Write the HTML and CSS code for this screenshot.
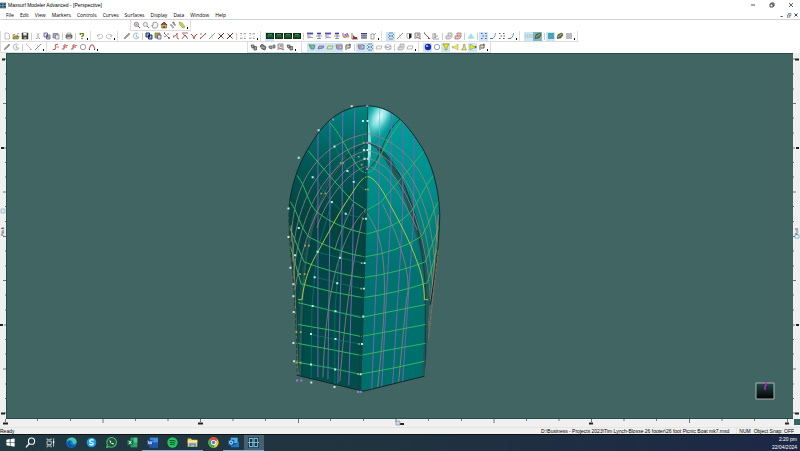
FILE: index.html
```html
<!DOCTYPE html>
<html lang="en">
<head>
<meta charset="utf-8">
<title>Maxsurf Modeler Advanced</title>
<link rel="stylesheet" href="styles.css">
</head>
<body>
<svg class="defs" aria-hidden="true">
<symbol id="mag" viewBox="0 0 8 8"><circle cx="3.4" cy="3.4" r="2.1" fill="#eee" stroke="#777" stroke-width=".8"/><path d="M5 5l2 2" stroke="#666"/><path d="M2.4 3.4h2M3.4 2.4v2" stroke="#c55" stroke-width=".6"/></symbol>
<symbol id="mag2" viewBox="0 0 8 8"><circle cx="3.4" cy="3.4" r="2.1" fill="#eee" stroke="#888" stroke-width=".7"/><path d="M5 5l2 2" stroke="#777"/></symbol>
<symbol id="hand" viewBox="0 0 8 8"><path d="M2 7L.8 4.3l1.2.3V2l1-.9 1 .5 1-.5 1 1 .8.7-.3 2.6L5.5 7z" fill="#f5f5f5" stroke="#777" stroke-width=".7"/></symbol>
<symbol id="home" viewBox="0 0 8 8"><path d="M1.8 4v3h4.6V4" fill="#d8b840" stroke="#554" stroke-width=".7"/><path d="M.8 4L4 1.2 7.2 4" fill="#b44" stroke="#433" stroke-width=".9"/><path d="M4 5v2" stroke="#222"/></symbol>
<symbol id="turn" viewBox="0 0 8 8"><path d="M1 4h2v2M7 4H5V2M3 2l2-1v2M5 6L3 7" fill="none" stroke="#667" stroke-width=".9"/></symbol>
<symbol id="shade" viewBox="0 0 8 8"><path d="M1 1l3 1 3 4-2 1-3-3z" fill="#d6d234" stroke="#886" stroke-width=".6"/></symbol>
<symbol id="new" viewBox="0 0 8 8"><path d="M2 1h3l1.5 1.5V7H2z" fill="#fff" stroke="#999" stroke-width=".6"/></symbol>
<symbol id="open" viewBox="0 0 8 8"><path d="M1 7V2.5h2l1 1h2V5" fill="#e8d070" stroke="#775" stroke-width=".6"/><path d="M1 7l1.2-2.5h5L6 7z" fill="#b5a52c" stroke="#554" stroke-width=".5"/><path d="M5 2l1.5-.5.5 1" fill="none" stroke="#444" stroke-width=".5"/></symbol>
<symbol id="save" viewBox="0 0 8 8"><path d="M1 1h6v6H1z" fill="#444b2e" stroke="#222" stroke-width=".5"/><path d="M2.3 1h3.4v2.5H2.3z" fill="#eee"/><path d="M2.8 5h2.6v2H2.8z" fill="#999"/></symbol>
<symbol id="cut" viewBox="0 0 8 8"><path d="M3 1l2 5M5 1L3 6" stroke="#aab" stroke-width=".7"/><path d="M2 6.5h1.5M4.7 6.5H6" stroke="#99a"/></symbol>
<symbol id="copy" viewBox="0 0 8 8"><path d="M1 1h3.5v4H1zM3.5 3H7v4H3.5z" fill="#dde" stroke="#447" stroke-width=".7"/><path d="M4.2 4.3h2M4.2 5.6h2" stroke="#447" stroke-width=".5"/></symbol>
<symbol id="copyb" viewBox="0 0 8 8"><path d="M1 1h3.5v4H1zM3.5 3H7v4H3.5z" fill="#9ad" stroke="#125" stroke-width=".9"/></symbol>
<symbol id="paste" viewBox="0 0 8 8"><path d="M1 1.5h5V6H1z" fill="#aaa" stroke="#666" stroke-width=".6"/><path d="M3.5 3H7v4H3.5z" fill="#eef" stroke="#667" stroke-width=".6"/></symbol>
<symbol id="pastey" viewBox="0 0 8 8"><path d="M1 1h5v5H1z" fill="#b2a83e" stroke="#553" stroke-width=".6"/><path d="M3.5 3H7v4H3.5z" fill="#cdf" stroke="#338" stroke-width=".6"/></symbol>
<symbol id="print" viewBox="0 0 8 8"><path d="M2 1h4v2H2z" fill="#eee" stroke="#777" stroke-width=".5"/><path d="M1 3h6v3H1z" fill="#888" stroke="#444" stroke-width=".6"/><path d="M2 5h4v2H2z" fill="#ddd" stroke="#555" stroke-width=".4"/></symbol>
<symbol id="help" viewBox="0 0 8 8"><path d="M2.3 3V1.6h3v2L4 4.3v1" fill="none" stroke="#7a8618" stroke-width="1.4"/><path d="M3.3 6.7h1.4" stroke="#554"/></symbol>
<symbol id="undo" viewBox="0 0 8 8"><path d="M1 4l1.5-2M1 4l2 1M1 4q4-3 5.5-.5T4 6.8H2" fill="none" stroke="#aaa" stroke-width=".7"/></symbol>
<symbol id="redo" viewBox="0 0 8 8"><path d="M7 4L5.500 2M7 4L5 5M7 4Q3 1 1.500 3.500T4 6.800h2" fill="none" stroke="#aaa" stroke-width=".7"/></symbol>
<symbol id="pen" viewBox="0 0 8 8"><path d="M1 7l1-2 4-4 1 1-4 4z" fill="#999" stroke="#666" stroke-width=".4"/></symbol>
<symbol id="clk" viewBox="0 0 8 8"><path d="M6.500 2A3 3 0 1 0 7 5H4.500V2.500" fill="#eef" stroke="#9aa" stroke-width=".7"/></symbol>
<symbol id="net1" viewBox="0 0 8 8"><path d="M1 1l3 3 2.500 2.500M4 2h2M1 5l2-1" fill="none" stroke="#a55" stroke-width=".8"/><path d="M5 6h2M1 1h1" stroke="#333"/></symbol>
<symbol id="net2" viewBox="0 0 8 8"><path d="M1 4h2l2-2v4l2 1" fill="none" stroke="#c33" stroke-width=".8"/><path d="M5 1v1M1 5h1" stroke="#444"/></symbol>
<symbol id="net3" viewBox="0 0 8 8"><path d="M1 1h6M1 7l3-4 3 4M2 2l4 3" fill="none" stroke="#944" stroke-width=".8"/></symbol>
<symbol id="net4" viewBox="0 0 8 8"><path d="M1 2l2 2 1 2 1-2 2-2" fill="none" stroke="#d22" stroke-width=".9"/><path d="M3.500 6.500h1" stroke="#333"/></symbol>
<symbol id="diag" viewBox="0 0 8 8"><path d="M1 7l6-6" stroke="#c33" stroke-width=".9"/><path d="M1 6h1M6 2h1M1 2h2" stroke="#555" stroke-width=".7"/></symbol>
<symbol id="gdiag" viewBox="0 0 8 8"><path d="M1 7l6-6" stroke="#777" stroke-width=".8"/><path d="M3 3h1M4 6h1" stroke="#999" stroke-width=".6"/></symbol>
<symbol id="ex" viewBox="0 0 8 8"><path d="M1 7l6-6" stroke="#333"/><path d="M1.500 1.500l5 5" stroke="#b33"/></symbol>
<symbol id="grp" viewBox="0 0 8 8"><path d="M2 2h4v4H2z" fill="none" stroke="#999" stroke-width=".6" stroke-dasharray="1 1"/><path d="M1.500 1.500h1M5.500 1.500h1M1.500 6.500h1M5.500 6.500h1" stroke="#666"/></symbol>
<symbol id="view" viewBox="0 0 8 8"><path d="M0 1h8v6H0z" fill="#162c18"/><path d="M1 4h6M2 2.500h4" stroke="#31a348" stroke-width=".9"/><path d="M1 5.700h6" stroke="#174" stroke-width=".6"/></symbol>
<symbol id="tbl" viewBox="0 0 8 8"><path d="M1 1.500h6" stroke="#54a" stroke-width="1.800"/><path d="M1 4h4M2 5.500h5" stroke="#889" stroke-width=".8"/><path d="M2 2v5" stroke="#99a" stroke-width=".6"/></symbol>
<symbol id="mark" viewBox="0 0 8 8"><path d="M2 1.500h4" stroke="#43b" stroke-width="1.600"/><path d="M4 2v5M1 4h6M2 6.500h4" stroke="#788" stroke-width=".8"/></symbol>
<symbol id="comb" viewBox="0 0 8 8"><path d="M1 1v3l2 2V2l2 3V1l2 4" fill="none" stroke="#965b95"/><path d="M1 5h6" stroke="#c8b427"/></symbol>
<symbol id="hist" viewBox="0 0 8 8"><path d="M1 1v6h6" fill="none" stroke="#444" stroke-width=".7"/><path d="M2 7V3l2 2 2 0v2z" fill="#a32c35"/></symbol>
<symbol id="grid" viewBox="0 0 8 8"><path d="M1 1h6v6H1z" fill="#aab"/><path d="M1 1.500h6" stroke="#33b"/><path d="M1 3.500h6M1 5.300h6M3 1v6M5 1v6" stroke="#667" stroke-width=".5"/></symbol>
<symbol id="calc" viewBox="0 0 8 8"><path d="M2 2h3v5H2zM5 3l2-2" fill="none" stroke="#888" stroke-width=".8"/></symbol>
<symbol id="mesh" viewBox="0 0 8 8"><path d="M1 2l2 2-2 2M3 4h2M7 2L5 4l2 2M2 1h4M2 7h4" fill="none" stroke="#567" stroke-width=".7"/></symbol>
<symbol id="half" viewBox="0 0 8 8"><path d="M4 1.500h2.500v4L4 7z" fill="#222"/><path d="M4 1.500H2v4L4 7" fill="none" stroke="#777" stroke-width=".6"/></symbol>
<symbol id="frame" viewBox="0 0 8 8"><path d="M1 7V1h5v5" fill="#ddd" stroke="#777" stroke-width=".8"/><path d="M2 5l5 2M3 3h2" stroke="#944" stroke-width=".8"/></symbol>
<symbol id="rdiag" viewBox="0 0 8 8"><path d="M1 1l5 5" stroke="#844" stroke-width=".9"/><path d="M5 6.500h2M1 1h1" stroke="#c33"/></symbol>
<symbol id="stack" viewBox="0 0 8 8"><path d="M1 1v6h6M2 2h2M3 4h3M2 5.500h2M3 1v5" fill="none" stroke="#777" stroke-width=".7"/></symbol>
<symbol id="sheet" viewBox="0 0 8 8"><path d="M1 7V4h2V1h4v4L5 7z" fill="#ddd" stroke="#999" stroke-width=".7"/><path d="M3 4h3" stroke="#888" stroke-width=".6"/></symbol>
<symbol id="sheetr" viewBox="0 0 8 8"><path d="M1 7V4h2V1h4v4L5 7z" fill="#e4c5c5" stroke="#a66" stroke-width=".7"/><path d="M3 4h3" stroke="#a44" stroke-width=".6"/></symbol>
<symbol id="tri" viewBox="0 0 8 8"><path d="M1 6.500l3-5 3 5z" fill="#8ee7ec" stroke="#a4dce0" stroke-width=".5"/></symbol>
<symbol id="curve" viewBox="0 0 8 8"><path d="M1 6.500q5 1 5.500-5.500" fill="none" stroke="#668dc8" stroke-width=".9"/><path d="M1 6.500h3" stroke="#558" stroke-width=".6"/></symbol>
<symbol id="pts" viewBox="0 0 8 8"><path d="M1 1.500h1.500M5 1.500h1.500M2.500 4H4M5.500 4H7M1 6.500h1.500M5 6.500h1.500" stroke="#558"/></symbol>
<symbol id="dash" viewBox="0 0 8 8"><path d="M0 3h8M0 5h8" stroke="#96a68d" stroke-width=".8" stroke-dasharray="1.300 .8"/></symbol>
<symbol id="leaf" viewBox="0 0 8 8"><path d="M1 6.500l1-4 4-1.500 1 2-2 3z" fill="#6f722c" stroke="#334" stroke-width=".5"/><path d="M2 5l4-3" stroke="#ccb" stroke-width=".6"/></symbol>
<symbol id="teal" viewBox="0 0 8 8"><path d="M1 1h6v6H1z" fill="#48a5b3"/></symbol>
<symbol id="gray" viewBox="0 0 8 8"><path d="M1 1h6v6H1z" fill="#bbb"/></symbol>
<symbol id="wave" viewBox="0 0 8 8"><path d="M1 6.500h2l1-2.500-1-2 3-.8" fill="none" stroke="#c44"/><path d="M5 4h2" stroke="#a55" stroke-width=".7"/></symbol>
<symbol id="step" viewBox="0 0 8 8"><path d="M1 6h2V4h3M3 4V2h2" fill="none" stroke="#c44"/><path d="M5 2.500h2" stroke="#a44" stroke-width=".7"/></symbol>
<symbol id="ring" viewBox="0 0 8 8"><circle cx="4" cy="4" r="2.700" fill="#fff" stroke="#888" stroke-width=".8"/></symbol>
<symbol id="arch" viewBox="0 0 8 8"><path d="M1 6l2-4h2l2 4" fill="none" stroke="#b33" stroke-width=".9"/><path d="M1 6.500h1M6 6.500h1" stroke="#333"/></symbol>
<symbol id="tool" viewBox="0 0 8 8"><path d="M1 2h3v3H2zM4 3.500h2.500V7H4z" fill="#aaa" stroke="#444" stroke-width=".7"/></symbol>
<symbol id="tool2" viewBox="0 0 8 8"><path d="M1 3l2-2 4 3-1 3-3-1z" fill="#777" stroke="#333" stroke-width=".6"/><path d="M2 4l4 1" stroke="#ccc" stroke-width=".7"/></symbol>
<symbol id="tool3" viewBox="0 0 8 8"><path d="M1 5V3h3v3zM5 2h2v3H5z" fill="#aaa" stroke="#555" stroke-width=".7"/></symbol>
<symbol id="flag" viewBox="0 0 8 8"><path d="M1 2h6l-1 4H3z" fill="#8dbf9e" stroke="#476" stroke-width=".7"/><path d="M1 1l3 4" stroke="#5a6" stroke-width=".8"/></symbol>
<symbol id="quadp" viewBox="0 0 8 8"><path d="M1 6l1-3h5L6 5z" fill="#b7a1d5" stroke="#736490" stroke-width=".8"/></symbol>
<symbol id="quady" viewBox="0 0 8 8"><path d="M1 6l1-3h5L6 6z" fill="#e3e9aa" stroke="#8a9850" stroke-width=".7"/></symbol>
<symbol id="quadr" viewBox="0 0 8 8"><path d="M1 2h6v4H2z" fill="#c7cbd9" stroke="#667" stroke-width=".8"/><path d="M2 4h3" stroke="#b45" stroke-width=".8"/></symbol>
<symbol id="quadw" viewBox="0 0 8 8"><path d="M1 6l1-3h5L6 6z" fill="#fff" stroke="#a99" stroke-width=".7"/></symbol>
<symbol id="dia" viewBox="0 0 8 8"><path d="M4 1l3 2v3L4 7 1 5V3zM1 3l6 3M7 3L1 5" fill="none" stroke="#88a" stroke-width=".6"/></symbol>
<symbol id="ball" viewBox="0 0 8 8"><circle cx="4" cy="4" r="3.200" fill="#1a28b4"/><circle cx="3" cy="3" r="1.100" fill="#b8c5ff"/></symbol>
<symbol id="lampd" viewBox="0 0 8 8"><path d="M1 1h6L5 4.500v2.300H3V4.500z" fill="#eef000" stroke="#664" stroke-width=".5"/></symbol>
<symbol id="lampl" viewBox="0 0 8 8"><path d="M7 1v6L3.500 5H1V3.500h2.500z" fill="#efe94e" stroke="#997" stroke-width=".5"/></symbol>
<symbol id="lampu" viewBox="0 0 8 8"><path d="M1.500 7h5L5 4V1.500H3.500V4z" fill="#efe94e" stroke="#664" stroke-width=".5"/></symbol>
<symbol id="lampr" viewBox="0 0 8 8"><path d="M1 1v6l3.500-2H7V3.500H4.500z" fill="#eef000" stroke="#776" stroke-width=".5"/><path d="M6 4h1.500" stroke="#222"/></symbol>
<symbol id="cfg" viewBox="0 0 8 8"><path d="M2 7V2h4v3H3M5 1l2 1" fill="none" stroke="#555"/><path d="M2 3h3" stroke="#b9a44e"/></symbol>
<symbol id="ax" viewBox="0 0 16 16"><path d="M0 0h16v16H0z" fill="#173447"/><path d="M2 2h5v12H2zM9 2h5v12H9zM0 8h16" fill="none" stroke="#7cb4cf" stroke-width="1.500"/></symbol>
</svg>

<div class="app">
<header>
  <div class="title">
    <svg class="logo" viewBox="0 0 16 16"><use href="#ax"/></svg>
    <span>Maxsurf Modeler Advanced - [Perspective]</span>
    <div class="winbtns">
      <button aria-label="Minimize"><svg viewBox="0 0 8 8"><path d="M2 4h4" stroke="#222" stroke-width=".8"/></svg></button>
      <button aria-label="Restore"><svg viewBox="0 0 8 8"><path d="M2 3h3v3H2zM3 3V2h3v3H5" fill="none" stroke="#222" stroke-width=".8"/></svg></button>
      <button aria-label="Close"><svg viewBox="0 0 8 8"><path d="M2 2l4 4M6 2L2 6" stroke="#222" stroke-width=".7"/></svg></button>
    </div>
  </div>
  <nav class="menu">
    <button>File</button><button>Edit</button><button>View</button><button>Markers</button><button>Controls</button><button>Curves</button><button>Surfaces</button><button>Display</button><button>Data</button><button>Window</button><button>Help</button>
    <div class="mdi">
      <button aria-label="Minimize view"><svg viewBox="0 0 8 8"><path d="M2 6h3" stroke="#445" stroke-width="1.200"/></svg></button>
      <button aria-label="Restore view"><svg viewBox="0 0 8 8"><path d="M2 4h3v3H2zM3.500 4V2h3v3H5" fill="none" stroke="#567" stroke-width=".9"/></svg></button>
      <button aria-label="Close view"><svg viewBox="0 0 8 8"><path d="M2 2l4 4M6 2L2 6" stroke="#445" stroke-width="1.300"/></svg></button>
    </div>
  </nav>
  <div class="row">
    <div class="bar view">
      <button aria-label="Zoom"><svg><use href="#mag"/></svg></button><button aria-label="Shrink"><svg><use href="#mag2"/></svg></button><button aria-label="Pan"><svg><use href="#hand"/></svg></button><button aria-label="Home view"><svg><use href="#home"/></svg></button><button aria-label="Rotate"><svg><use href="#turn"/></svg></button><button aria-label="Color"><svg><use href="#shade"/></svg></button><i class="more"></i>
    </div>
  </div>
  <div class="row">
    <div class="bar first">
      <button aria-label="New"><svg><use href="#new"/></svg></button><button aria-label="Open"><svg><use href="#open"/></svg></button><button aria-label="Save"><svg><use href="#save"/></svg></button><i class="sep"></i><button aria-label="Cut"><svg><use href="#cut"/></svg></button><button aria-label="Copy"><svg><use href="#copy"/></svg></button><button aria-label="Paste"><svg><use href="#paste"/></svg></button><i class="sep"></i><button aria-label="Print"><svg><use href="#print"/></svg></button><i class="sep"></i><button aria-label="Help"><svg><use href="#help"/></svg></button><i class="more"></i>
    </div>
    <div class="bar">
      <button aria-label="Undo"><svg><use href="#undo"/></svg></button><button aria-label="Redo"><svg><use href="#redo"/></svg></button><i class="more"></i>
    </div>
    <div class="bar">
      <button aria-label="Edit control"><svg><use href="#pen"/></svg></button><button aria-label="Properties"><svg><use href="#clk"/></svg></button><i class="sep"></i><button aria-label="Copy points"><svg><use href="#copyb"/></svg></button><button aria-label="Paste points"><svg><use href="#pastey"/></svg></button><button aria-label="Add row"><svg><use href="#net1"/></svg></button><button aria-label="Add column"><svg><use href="#net2"/></svg></button><button aria-label="Net"><svg><use href="#net3"/></svg></button><button aria-label="Bend"><svg><use href="#net4"/></svg></button><button aria-label="Align"><svg><use href="#diag"/></svg></button><button aria-label="Straighten"><svg><use href="#gdiag"/></svg></button><button aria-label="Delete"><svg><use href="#ex"/></svg></button><button aria-label="Delete row"><svg><use href="#ex"/></svg></button><i class="sep"></i><button aria-label="Group"><svg><use href="#grp"/></svg></button><button aria-label="Ungroup"><svg><use href="#grp"/></svg></button><i class="more"></i>
    </div>
    <div class="bar">
      <button class="on" aria-label="Perspective"><svg><use href="#view"/></svg></button><button aria-label="Plan"><svg><use href="#view"/></svg></button><button aria-label="Profile"><svg><use href="#view"/></svg></button><button aria-label="Body plan"><svg><use href="#view"/></svg></button><i class="sep"></i><button aria-label="Control table"><svg><use href="#tbl"/></svg></button><button aria-label="Surfaces"><svg><use href="#mark"/></svg></button><button aria-label="Markers"><svg><use href="#tbl"/></svg></button><button aria-label="Offsets"><svg><use href="#mark"/></svg></button><button aria-label="Curvature"><svg><use href="#comb"/></svg></button><button aria-label="Graph"><svg><use href="#hist"/></svg></button><button aria-label="Table"><svg><use href="#grid"/></svg></button><button aria-label="Calculate"><svg><use href="#calc"/></svg></button><i class="more"></i>
    </div>
    <div class="bar">
      <button class="on" aria-label="Control net"><svg><use href="#mesh"/></svg></button><button aria-label="Line"><svg><use href="#gdiag"/></svg></button><button aria-label="Half"><svg><use href="#half"/></svg></button><button aria-label="Frame"><svg><use href="#frame"/></svg></button><button aria-label="Diagonal"><svg><use href="#rdiag"/></svg></button><button aria-label="Stations"><svg><use href="#stack"/></svg></button><i class="sep"></i><button aria-label="Section"><svg><use href="#sheet"/></svg></button><button aria-label="Section mark"><svg><use href="#sheetr"/></svg></button><i class="sep"></i><button aria-label="Triangle"><svg><use href="#tri"/></svg></button><i class="sep"></i><button class="on" aria-label="Edges"><svg><use href="#pts"/></svg></button><button aria-label="Feature"><svg><use href="#curve"/></svg></button><button aria-label="Points"><svg><use href="#pts"/></svg></button><button aria-label="Contour"><svg><use href="#curve"/></svg></button><i class="more"></i>
    </div>
    <div class="bar">
      <button class="on" aria-label="Grid"><svg><use href="#dash"/></svg></button><button class="on deep" aria-label="Material"><svg><use href="#leaf"/></svg></button><i class="sep"></i><button class="on" aria-label="Render"><svg><use href="#teal"/></svg></button><button aria-label="Texture"><svg><use href="#leaf"/></svg></button><button aria-label="Flat"><svg><use href="#gray"/></svg></button><i class="more"></i>
    </div>
  </div>
  <div class="row">
    <div class="bar first">
      <button aria-label="Pen"><svg><use href="#pen"/></svg></button><button aria-label="Marker properties"><svg><use href="#clk"/></svg></button><i class="sep"></i><button aria-label="Add marker"><svg><use href="#rdiag" opacity=".4"/></svg></button><button aria-label="Snap marker"><svg><use href="#gdiag"/></svg></button><i class="more"></i>
    </div>
    <div class="bar">
      <button aria-label="Spline"><svg><use href="#wave"/></svg></button><button aria-label="Polyline"><svg><use href="#step"/></svg></button><button aria-label="Arc"><svg><use href="#step"/></svg></button><button aria-label="Circle"><svg><use href="#ring"/></svg></button><button aria-label="Arch"><svg><use href="#arch"/></svg></button><i class="more"></i>
    </div>
    <div class="bar surf">
      <button aria-label="Add surface"><svg><use href="#tool"/></svg></button><button aria-label="Size surface"><svg><use href="#tool2"/></svg></button><button aria-label="Move surface"><svg><use href="#tool3"/></svg></button><button aria-label="Trim surface"><svg><use href="#frame"/></svg></button><button aria-label="Join surface"><svg><use href="#tool"/></svg></button><i class="more"></i>
    </div>
    <div class="bar disp">
      <button class="on" aria-label="Show hull"><svg><use href="#flag"/></svg></button><button class="on" aria-label="Buttocks"><svg><use href="#quadp"/></svg></button><button class="on" aria-label="Waterlines"><svg><use href="#quady"/></svg></button><button class="on" aria-label="Sections"><svg><use href="#quadr"/></svg></button><button aria-label="Diagonals"><svg><use href="#cfg"/></svg></button><i class="sep"></i><button class="on" aria-label="Edges shown"><svg><use href="#quadr"/></svg></button><button class="on" aria-label="Bonded edges"><svg><use href="#mesh"/></svg></button><button aria-label="Curves shown"><svg><use href="#quadw"/></svg></button><button aria-label="Intersections"><svg><use href="#dia"/></svg></button><i class="sep"></i><button aria-label="Normals"><svg><use href="#sheet"/></svg></button><button aria-label="Patch"><svg><use href="#quadw"/></svg></button><i class="more"></i>
    </div>
    <div class="bar">
      <button class="on" aria-label="Rendered"><svg><use href="#ball"/></svg></button><button aria-label="Wireframe"><svg><use href="#ring"/></svg></button><button class="on" aria-label="Light 1"><svg><use href="#lampd"/></svg></button><button aria-label="Light 2"><svg><use href="#lampl"/></svg></button><button aria-label="Light 3"><svg><use href="#lampu"/></svg></button><button class="on" aria-label="Light 4"><svg><use href="#lampr"/></svg></button><button aria-label="Light settings"><svg><use href="#cfg"/></svg></button><i class="more"></i>
    </div>
  </div>
</header>

<main>
  <svg class="ruler" viewBox="0 53 6 366" preserveAspectRatio="none">
    <path d="M4 59h2M5 74h1M5 89h1M3 103.500h3M5 118h1M5 133h1M4 148h2M5 162.500h1M5 177h1M3 192h3M5 206.500h1M5 221.500h1M3 236.500h3M5 251h1M5 266h1M3 280.500h3M5 295h1M5 310h1M4 325h2M5 339.500h1M5 354h1M3 369h3M5 384h1M5 398.500h1M4 413h2" stroke="#555" stroke-width=".8"/>
    <path d="M2 59.500h3M1 148h3M0 325h3M1 413.500h4" stroke="#222" stroke-width="2"/>
    <path d="M1 209h4v4H1z" fill="#dfe9ef" stroke="#9ab" stroke-width=".7"/>
    <text transform="translate(4 236) rotate(-90)">Pitch</text>
  </svg>
  <section class="canvas">
    <svg class="model" viewBox="6 53 787 366" role="img" aria-label="Hull model">
      <defs>
        <linearGradient id="L" gradientUnits="userSpaceOnUse" x1="345" x2="325" y1="105" y2="390"><stop offset="0" stop-color="#008582"/><stop offset=".2" stop-color="#005a57"/><stop offset=".4" stop-color="#004341"/><stop offset="1" stop-color="#004f4c"/></linearGradient>
        <linearGradient id="R" gradientUnits="userSpaceOnUse" x1="400" x2="395" y1="105" y2="390"><stop offset="0" stop-color="#009f9c"/><stop offset=".3" stop-color="#008c88"/><stop offset=".55" stop-color="#007471"/><stop offset="1" stop-color="#006e6a"/></linearGradient>
        <radialGradient id="G" gradientUnits="userSpaceOnUse" cx="0" cy="0" r="1" gradientTransform="translate(379 116) rotate(30) scale(15 29)"><stop offset="0" stop-color="#e9ffff"/><stop offset=".35" stop-color="#9aeceb" stop-opacity=".85"/><stop offset="1" stop-color="#1aa" stop-opacity="0"/></radialGradient>
        <linearGradient id="S" x1="0" x2="0" y1="0" y2="1"><stop offset="0" stop-color="#cff" stop-opacity=".3"/><stop offset=".6" stop-color="#cff" stop-opacity=".8"/><stop offset="1" stop-color="#cff" stop-opacity="0"/></linearGradient>
        <clipPath id="hull"><path d="M367 105C343 105 325 119 313 139C300 157 290 182 288 207C287 225 289 250 292 277C294 308 296 345 296 376L358 391L363 392L424 377L430 305C434 280 439 245 439.500 215C439 190 432 160 417 140C402 117 388 106 367 105z"/></clipPath>
      </defs>
      <g clip-path="url(#hull)">
        <path d="M367 100L280 100V400H360L363 300L366 200z" fill="url(#L)"/>
        <path d="M367 100H445V400H360L363 300L366 200z" fill="url(#R)"/>
        <path d="M367 104h45v50h-45z" fill="url(#G)"/>
        <path d="M367 120q7 22 0 55z" fill="url(#S)"/>
        <g fill="none" stroke-width="4">
          <path d="M345 157C329 175 316 204 310 230C303 258 299 290 298 378" stroke="#2d6765" opacity=".65"/>
          <path d="M378 148C401 174 413 215 422 252C428 280 428 320 423 378" stroke="#1d5958"/>
        </g>
        <g fill="none" stroke="#163a3d" stroke-width=".9">
          <path d="M367 142C390 147 407 184 415 222C422 247 426 280 425 305V378"/>
          <path d="M367 142C392 154 408 187 418 226C426 260 430 285 430 310L425 378"/>
          <path d="M367 142C337 154 318 196 309 230C302 258 298 290 297 378"/>
          <path d="M367 142C342 154 323 189 313 228C305 258 303 280 301 378"/>
          <path d="M400 118C382 131 382 160 367 169"/>
        </g>
        <g fill="none" stroke="#7364b4">
          <path d="M317 125V378M329 114V225L327 380M342 110L341 250L337 384M354 106L352 250L348 386"/>
          <path d="M379 135L378 220L371 392M391 108L390 220L381 390M403 115L402 220L392 388M414 130L413 220L402 385"/>
        </g>
        <path d="M379 104V135" stroke="#7fb4d4" stroke-width=".7"/>
        <g fill="none" stroke="#9c7f7d" stroke-width=".8">
          <path d="M290 242C292 160 337 139 367 133C397 139 439 170 437 250"/>
          <path d="M291 262C296 180 336 148 367 142C397 148 434 190 435 280"/>
          <path d="M292 280C299 195 339 155 367 150C395 155 429 195 433 300"/>
          <path d="M294 290C307 203 343 162 367 158C391 162 424 203 430 300"/>
          <path d="M322 378C325 285 341 235 364 210C382 235 391 260 377 388"/>
          <path d="M339 382C345 300 356 240 364 210"/>
          <path d="M316 228C326 195 352 168 367 166C382 168 402 195 417 230"/>
          <path d="M334 250C340 228 350 212 352 204M382 204C397 234 413 278 406 300L398 384"/>
        </g>
        <g fill="none" stroke="#35b464">
          <path d="M329 122C343 138 348 155 360 170Q367 176 374 168C382 150 388 137 402 119"/>
          <path d="M307 150Q330 178 352 201L366 210L380 202Q404 175 424 150"/>
          <path d="M296 175C306 188 306 202 316 212Q335 227 366 234Q397 227 410 212C419 201 423 187 434 174"/>
          <path d="M288 200C298 213 298 226 308 237Q335 252 364 257Q397 252 420 237C428 228 432 210 439 200"/>
          <path d="M288 226L303 262Q330 273 362 278Q397 273 425 262L439 226"/>
          <path d="M289 245L300 284Q330 293 362 298Q398 293 427 283L438 245"/>
          <path d="M297 303L360 318L425 305M297 325Q330 330 360 337Q390 332 425 325M297 344Q330 350 360 356Q390 350 425 344M296 363Q330 368 359 375Q390 370 424 362"/>
        </g>
        <path d="M297 300H301C303 280 310 263 317 252C325 237 340 209 348 198C356 186 360 178 367 176C376 178 385 196 387 200C397 218 409 240 416 260C421 273 424 285 424 300H428" fill="none" stroke="#b0c53f"/>
        <path d="M290 225C295 280 294 320 297 376M438 215C434 270 431 290 428 330" fill="none" stroke="#b98658" stroke-width=".8"/>
        <g fill="none" stroke="#147e7b" stroke-width=".6">
          <path d="M351 106L361 120L364 175M318 129L334 146L346 170L354 181L364 190M312 176L331 202L345 214L363 218M316 252L339 258L362 263M313 277L336 283L361 289M312 306L335 312L361 317M310 335L335 340L361 345M310 365L334 370L360 375"/>
          <path d="M331 202L316 252L311 306L310 383M345 214L338 260L334 312L334 388"/>
        </g>
        <path d="M367 105L366 200L363 300L360 392M364 160L361 300L358 391" fill="none" stroke="#173d40" stroke-width=".9"/>
      </g>
      <path d="M288 207C290 182 300 157 313 139C325 119 343 105 367 105C388 106 402 117 417 140C432 160 439 190 439.500 215C439 245 434 280 430 305M296 376L358 391L363 392L424 377" fill="none" stroke="#142629"/>
      <path d="M288 207C287 225 289 250 292 277C294 308 296 345 296 376" fill="none" stroke="#283d3d" stroke-dasharray="4 2"/>
      <path d="M438 250L434 285L428 340" fill="none" stroke="#a66d58" stroke-width=".8" stroke-dasharray="5 1"/>
      <g fill="none" stroke="#b8efe1" stroke-width="6" stroke-linecap="square">
        <path transform="translate(280 95) scale(.333)" d="M213 32h.1M247 76h.1M261 76h.1M113 104h.1M161 153h.1M250 164h.1M261 164h.1M252 190h.1M262 190h.1M53 187h.1M95 246h.1M200 227h.1M219 260h.1M153 321h.1"/>
        <path transform="translate(280 200) scale(.333)" d="M22 25h.1M195 41h.1M256 56h.1M53 84h.1M22 111h.1M110 156h.1M178 174h.1M42 166h.1M28 204h.1M252 190h.1M101 233h.1M169 251h.1M37 254h.1M250 267h.1"/>
        <path transform="translate(280 295) scale(.333)" d="M37 5h.1M95 34h.1M38 52h.1M164 50h.1M248 66h.1M90 119h.1M164 134h.1M244 149h.1M37 146h.1M39 201h.1M90 211h.1M163 226h.1M240 240h.1M91 265h.1M161 279h.1"/>
      </g>
      <g fill="none" stroke="#a9a957" stroke-width="5" stroke-linecap="square">
        <path transform="translate(280 95) scale(.333)" d="M180 203h.1M188 203h.1M121 295h.1M134 295h.1M255 283h.1M262 283h.1M249 142h.1M234 184h.1M243 208h.1"/>
        <path transform="translate(280 200) scale(.333)" d="M72 137h.1M84 137h.1M57 223h.1M71 223h.1M248 56h.1M243 190h.1M242 267h.1"/>
        <path transform="translate(280 295) scale(.333)" d="M46 113h.1M59 113h.1M46 205h.1M59 205h.1M235 149h.1M232 240h.1"/>
      </g>
      <g fill="none" stroke="#9584d4" stroke-width="6" stroke-linecap="square">
        <path transform="translate(280 95) scale(.333)" d="M260 31h.1M260 142h.1M260 221h.1M157 72h.1"/>
        <path transform="translate(280 295) scale(.333)" d="M48 259h.1M61 259h.1M232 293h.1M240 293h.1"/>
      </g>
    </svg>
    <svg class="gizmo" viewBox="0 0 20 18" aria-label="Orientation">
      <defs><linearGradient id="Z" x1="0" x2="0" y1="0" y2="1"><stop offset="0" stop-color="#234c4b"/><stop offset="1" stop-color="#000"/></linearGradient></defs>
      <path d="M1 1h18v16H1z" fill="url(#Z)" stroke="#a9b5b4"/><path d="M11 0v3l-1 2v3" fill="none" stroke="#d01bd0" stroke-width="1.400"/>
    </svg>
  </section>
  <svg class="ruler" viewBox="793 53 7 366" preserveAspectRatio="none">
    <path d="M793 59h2M793 74h1M793 89h1M793 103.500h3M793 118h1M793 133h1M793 148h2M793 162.500h1M793 177h1M793 192h3M793 206.500h1M793 221.500h1M793 236.500h3M793 251h1M793 266h1M793 280.500h3M793 295h1M793 310h1M793 325h2M793 339.500h1M793 354h1M793 369h3M793 384h1M793 398.500h1M793 413h2" stroke="#555" stroke-width=".8"/>
    <path d="M795 59.500h4M796 148h3M796 325h3M795 413.500h4" stroke="#222" stroke-width="2"/>
    <path d="M795 235h4v3h-4z" fill="#fff" stroke="#59b" stroke-width=".7"/>
    <text transform="translate(798 235) rotate(-90)">Roll</text>
  </svg>
  <svg class="ruler bottom" viewBox="0 419 800 8" preserveAspectRatio="none">
    <path d="M5.500 419v3M37.500 419v2M70.500 419v2M103 419v4M135.500 419v2M168 419v2M200.500 419v3M233 419v2M265.500 419v2M298.500 419v4M330.500 419v2M363.500 419v2M396 419v3M428.500 419v2M461.500 419v2M494 419v4M526.500 419v2M559 419v2M591.500 419v3M624 419v2M656.500 419v2M689.500 419v4M722 419v2M754.500 419v2M787.500 419v3" stroke="#555" stroke-width=".8"/>
    <path d="M3 423.500h5M198 423.500h5M400 424h4M589 423.500h4M785 423.500h4" stroke="#222" stroke-width="2"/>
    <path d="M396 421h4v4h-4z" fill="#c9dbe6" stroke="#789" stroke-width=".6"/>
    <path d="M794 419h6v6h-6z" fill="#376563"/>
  </svg>
</main>

<footer class="status">
  <span>Ready</span>
  <span class="path">D:\Business - Projects 2023\Tim Lynch-Blosse 26 footer\26 foot Picnic Boat mk7.msd</span>
  <span class="cell">NUM</span>
  <span>Object Snap: OFF</span>
</footer>

<div class="taskbar">
  <div class="apps">
  <button aria-label="Start"><svg viewBox="0 0 16 16"><path d="M2 4l5-1v4.500H2zM8 3l6-1v5.500H8zM2 8.500h5V13l-5-1zM8 8.500h6V14l-6-1z" fill="#fff"/></svg></button>
  <button aria-label="Search"><svg viewBox="0 0 16 16"><circle cx="9.500" cy="6" r="4.500" fill="none" stroke="#fff" stroke-width="1.600"/><path d="M6 9.500L1.500 15" stroke="#fff" stroke-width="1.800"/></svg></button>
  <button aria-label="Task view"><svg viewBox="0 0 16 16"><path d="M3 6h6v5H3zM3 2v2h6V2M3 15v-2h6v2M12.500 2v12" fill="none" stroke="#cdd3d6" stroke-width="1.300"/><path d="M11.500 6h2v3h-2z" fill="#fff"/></svg></button>
  <button aria-label="Edge"><svg viewBox="0 0 16 16"><circle cx="8" cy="8" r="7.500" fill="#1278d0"/><path d="M1 6C3-1 15-1 15.500 7c0 3-5 4-6 2 1-4-4-6-8.500-3z" fill="#42c7ae"/><path d="M6 8c0 4 4 6 8 4-3 4-10 4-12-2 0-3 2-5 5-5z" fill="#0b559e"/></svg></button>
  <button aria-label="Skype"><svg viewBox="0 0 16 16"><circle cx="8" cy="8" r="7" fill="#1c9de8"/><path d="M11 5C9 3 5 4 5.500 6.300 6 8.500 11 7.500 10.500 10c-.5 2-4 2-5.500 0" fill="none" stroke="#fff" stroke-width="1.800"/></svg></button>
  <button aria-label="WhatsApp"><svg viewBox="0 0 16 16"><path d="M1 15l1-4a7 7 0 1 1 3 3z" fill="#23523f" stroke="#45c66b" stroke-width="1.500"/><path d="M5.500 4.500c-1 3 2 6.500 5.500 6.500l.5-1.500-2-1-1 1L7 8l.7-1.300z" fill="#e6fff0"/></svg></button>
  <button aria-label="Excel"><svg viewBox="0 0 16 16"><path d="M5 1h10v14H5z" fill="#2fa36b"/><path d="M10 1h5v7h-5z" fill="#4bc78c"/><path d="M0 4h9v8H0z" fill="#126b3c"/><path d="M2.500 5.500l4 5M6.500 5.500l-4 5" stroke="#fff" stroke-width="1.300"/></svg></button>
  <button class="run" aria-label="Word"><svg viewBox="0 0 16 16"><path d="M4 1h12v14H4z" fill="#3c8ee8"/><path d="M4 8h12v7H4z" fill="#1e58b4"/><path d="M0 4h9v8H0z" fill="#184c9c"/><path d="M1.500 5.500l1.500 5 1.500-4 1.500 4 1.500-5" fill="none" stroke="#fff"/></svg></button>
  <button class="run" aria-label="Spotify"><svg viewBox="0 0 16 16"><circle cx="8" cy="8" r="7.500" fill="#1fc65c"/><path d="M3.500 5.500q5-1.500 9 .8M4 8.300q4-1.300 7.500.7M4.500 11q3.500-1 6 .5" fill="none" stroke="#16382a" stroke-width="1.400"/></svg></button>
  <button class="run" aria-label="File Explorer"><svg viewBox="0 0 16 16"><path d="M1 2h5l1 2h8v10H1z" fill="#f2cb5c"/><path d="M1 5h14v3H1z" fill="#fae39a"/><path d="M3 14V9h10v5h-3v-2H6v2z" fill="#4c9fd8"/></svg></button>
  <button aria-label="Chrome"><svg viewBox="0 0 16 16"><circle cx="8" cy="8" r="7.500" fill="#f0c938"/><path d="M8 8L1.500 4.300A7.500 7.500 0 0 1 14.500 4.300z" fill="#dd4b3e"/><path d="M8 8L1.500 4.300A7.500 7.500 0 0 0 8 15.500L10 11z" fill="#38a852"/><circle cx="8" cy="8" r="3.700" fill="#fff"/><circle cx="8" cy="8" r="2.600" fill="#4a80e8"/></svg></button>
  <button class="run" aria-label="Outlook"><svg viewBox="0 0 16 16"><path d="M4 1h10v8H4z" fill="#4bb4ee"/><path d="M4 7l6 4 6-4v8H4z" fill="#1d77c4"/><path d="M0 4h9v8H0z" fill="#0d5ca8"/><circle cx="4.500" cy="8" r="2.300" fill="none" stroke="#fff" stroke-width="1.300"/></svg></button>
  <button class="run active" aria-label="Maxsurf"><svg viewBox="0 0 16 16"><use href="#ax"/></svg></button>
  </div>
  <div class="clock"><time>2:20 pm</time><time>22/04/2024</time></div>
</div>
</div>
</body>
</html>
```
FILE: styles.css
```css
* { box-sizing: border-box; }
body { margin: 0; font: 5px/8px "Open Sans", "Noto Sans", sans-serif; color: #000; background: #fff; }
button { appearance: none; border: 0; margin: 0; padding: 0; background: none; font: inherit; color: inherit; }
svg { display: block; }
.defs { position: absolute; width: 0; height: 0; }
.app { display: flex; flex-direction: column; min-height: 100vh; }

.title { display: flex; align-items: center; height: 10px; font-family: "Liberation Sans", sans-serif; }
.logo { width: 6px; height: 7px; margin-right: 2px; }
.winbtns { display: flex; margin-left: auto; }
.winbtns button { width: 19px; display: grid; place-items: center; }
.winbtns svg { width: 8px; height: 8px; }

.menu { display: flex; align-items: center; gap: 6px; height: 10px; padding-left: 6px; border-bottom: 1px solid #d4d4d4; }
.mdi { display: flex; margin-left: auto; }
.mdi button { width: 7px; }
.mdi svg { width: 6px; height: 6px; }

.row { display: flex; height: 11px; }
.bar { display: flex; align-items: center; padding-left: 4px; border-left: 1px solid #ddd; border-bottom: 1px solid #ddd; }
.bar:last-child { border-right: 1px solid #ddd; }
.bar.first { padding-left: 1px; }
.bar.view { margin-left: 130px; padding-left: 1px; }
.bar.surf { margin-left: 147px; padding-left: 1px; }
.bar.disp { margin-left: 3px; padding-left: 5px; }
.bar button { width: 9px; height: 9px; display: grid; place-items: center; }
.bar svg { width: 8px; height: 8px; }
.bar .on { background: #cce6f8; }
.bar .deep { background: #76b9c6; }
.sep { width: 1px; height: 7px; margin: 0 1px 0 2px; background: #ccc; }
.more { align-self: flex-end; width: 1px; height: 2px; margin: 0 2px 1px 1px; background: #111; }

main { flex: 1; display: grid; grid-template: minmax(0, 1fr) 8px / 6px minmax(0, 1fr) 7px; background: #f0f0f0; }
.ruler { width: 100%; height: 100%; font-size: 4px; }
.ruler.bottom { grid-column: 1 / -1; }
.canvas { position: relative; background: #416563; border: 1px solid #234e4d; border-right-width: 0; }
.model { position: absolute; inset: 0; width: 100%; height: 100%; }
.gizmo { position: absolute; right: 18px; bottom: 18px; width: 20px; height: 18px; }

.status { display: flex; height: 8px; padding-right: 6px; gap: 3px; background: #f0f0f0; border-bottom: 1px solid #111; border-top: 1px solid #e4e4e4; font-family: "Liberation Sans", sans-serif; line-height: 6px; }
.path { margin-left: auto; padding-right: 4px; }
.cell { padding-left: 2px; border-left: 1px solid #ddd; }

.taskbar { display: flex; justify-content: space-between; height: 16px; background: linear-gradient(90deg, #203943, #20343f 45%, #1c2746); }
.apps { display: flex; width: 33%; }
.apps button { flex: 1; display: grid; place-items: center; border-bottom: 1px solid transparent; }
.apps svg { width: 11px; height: 11px; }
.apps .run { border-bottom-color: #69b1e3; }
.apps .active { background: #45626e; }
.clock { padding-right: 3px; display: flex; flex-direction: column; align-items: flex-end; color: #fff; font-family: "Liberation Sans", sans-serif; }
```
